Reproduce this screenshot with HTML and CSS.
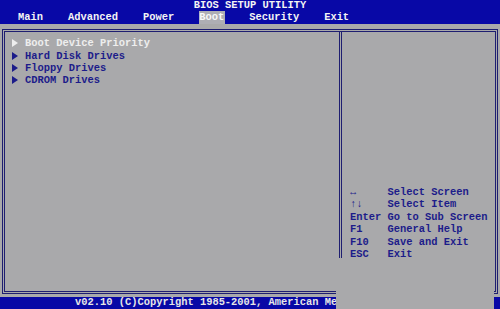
FILE: index.html
```html
<!DOCTYPE html>
<html lang="en">
<head>
  <meta charset="UTF-8">
  <meta name="viewport" content="width=device-width, initial-scale=1.0">
  <title>BIOS Setup Utility</title>
  <link rel="stylesheet" href="styles.css">
</head>
<body>
  <div class="screen">
    <header class="header">
      <div class="title">BIOS SETUP UTILITY</div>
      <nav class="menu">
        <span class="menu-item">Main</span>
        <span class="menu-item">Advanced</span>
        <span class="menu-item">Power</span>
        <span class="menu-item menu-item--active">Boot</span>
        <span class="menu-item">Security</span>
        <span class="menu-item">Exit</span>
      </nav>
    </header>

    <div class="body">
      <div class="frame">
        <div class="left-panel">
          <div class="item item--selected">
            <svg class="arrow" width="6" height="8" viewBox="0 0 6 8"><polygon points="0,0 6,4 0,8" /></svg>
            <span>Boot Device Priority</span>
          </div>
          <div class="item">
            <svg class="arrow" width="6" height="8" viewBox="0 0 6 8"><polygon points="0,0 6,4 0,8" /></svg>
            <span>Hard Disk Drives</span>
          </div>
          <div class="item">
            <svg class="arrow" width="6" height="8" viewBox="0 0 6 8"><polygon points="0,0 6,4 0,8" /></svg>
            <span>Floppy Drives</span>
          </div>
          <div class="item">
            <svg class="arrow" width="6" height="8" viewBox="0 0 6 8"><polygon points="0,0 6,4 0,8" /></svg>
            <span>CDROM Drives</span>
          </div>
        </div>
        <div class="right-panel">
          <div class="help-row"><span class="help-key">&harr;</span><span>Select Screen</span></div>
          <div class="help-row"><span class="help-key">&uarr;&darr;</span><span>Select Item</span></div>
          <div class="help-row"><span class="help-key">Enter</span><span>Go to Sub Screen</span></div>
          <div class="help-row"><span class="help-key">F1</span><span>General Help</span></div>
          <div class="help-row"><span class="help-key">F10</span><span>Save and Exit</span></div>
          <div class="help-row"><span class="help-key">ESC</span><span>Exit</span></div>
        </div>
      </div>
    </div>

    <footer class="footer">v02.10 (C)Copyright 1985-2001, American Megatrends, Inc.</footer>

    <!-- grey patch covering the lower right corner of the photo -->
    <div class="patch"></div>
  </div>
</body>
</html>
```

FILE: styles.css
```css
body {
  margin: 0;
  padding: 0;
  background: #a9a9ab;
}
.screen {
  position: relative;
  width: 500px;
  height: 309px;
  overflow: hidden;
  font-family: "Liberation Mono", "DejaVu Sans Mono", monospace;
  font-weight: bold;
  font-size: 10.42px;
  background: #a9a9ab;
}
.header {
  background: #0808a6;
  color: #f4f4f4;
  height: 24px;
}
.title {
  text-align: center;
  line-height: 11px;
  height: 11px;
}
.menu {
  display: flex;
  gap: 25px;
  padding-left: 18px;
  line-height: 12px;
  height: 13px;
}
.menu-item {
  padding: 0 0.5px;
  margin: 0 -0.5px;
}
.menu-item--active {
  background: #aeaeb4;
  color: #f8f8f8;
}
.body {
  height: 273px;
  padding: 5px 2px 0 2px;
  box-sizing: border-box;
}
.frame {
  display: flex;
  height: 265px;
  border: 3px double #1e1e70;
  box-sizing: border-box;
}
.left-panel {
  width: 327px;
  border-right: 3px double #1e1e70;
  padding: 5px 0 0 7px;
  box-sizing: content-box;
}
.item {
  display: flex;
  align-items: center;
  height: 12.4px;
  color: #1c1c8a;
}
.item--selected {
  color: #eeeeee;
}
.arrow {
  width: 6px;
  height: 8px;
  margin-right: 7px;
  fill: currentColor;
}
.right-panel {
  flex: 1;
  padding: 154px 0 0 8px;
  color: #1c1c8a;
}
.help-row {
  display: flex;
  height: 12.4px;
  line-height: 12.4px;
  white-space: nowrap;
}
.help-key {
  width: 37.5px;
}
.footer {
  background: #0808a6;
  color: #e6e6e6;
  height: 12px;
  line-height: 11px;
  padding-left: 75px;
  white-space: nowrap;
}
.patch {
  position: absolute;
  left: 336px;
  top: 258px;
  width: 158px;
  height: 51px;
  background: #a9a9ab;
}
```
